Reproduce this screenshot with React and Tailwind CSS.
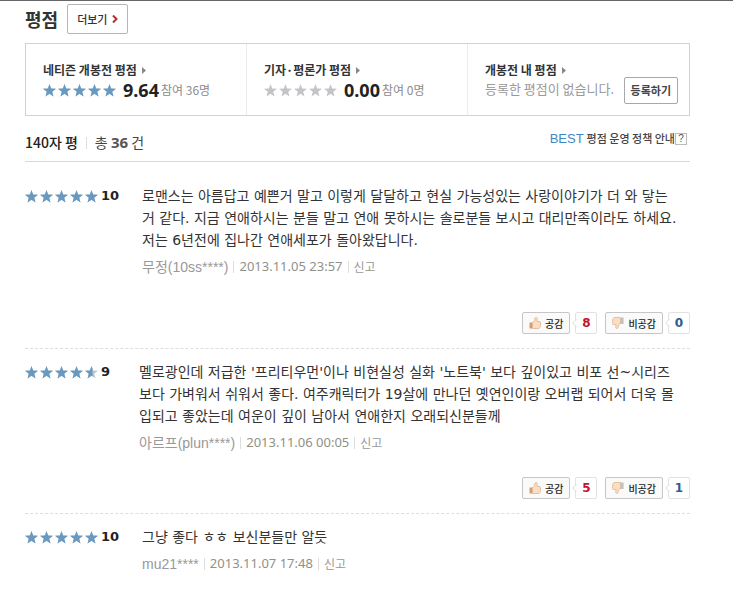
import React, { useState } from "react";

const reviews = [
  {
    id: 1,
    score: 10,
    lines: [
      "로맨스는 아름답고 예쁜거 말고 이렇게 달달하고 현실 가능성있는 사랑이야기가 더 와 닿는",
      "거 같다. 지금 연애하시는 분들 말고 연애 못하시는 솔로분들 보시고 대리만족이라도 하세요.",
      "저는 6년전에 집나간 연애세포가 돌아왔답니다.",
    ],
    author: "무정(10ss****)",
    date: "2013.11.05 23:57",
    likes: 8,
    dislikes: 0,
  },
  {
    id: 2,
    score: 9,
    lines: [
      "멜로광인데 저급한 '프리티우먼'이나 비현실성 실화 '노트북' 보다 깊이있고 비포 선~시리즈",
      "보다 가벼워서 쉬워서 좋다. 여주캐릭터가 19살에 만나던 옛연인이랑 오버랩 되어서 더욱 몰",
      "입되고 좋았는데 여운이 깊이 남아서 연애한지 오래되신분들께",
    ],
    author: "아르프(plun****)",
    date: "2013.11.06 00:05",
    likes: 5,
    dislikes: 1,
  },
  {
    id: 3,
    score: 10,
    lines: ["그냥 좋다 ㅎㅎ 보신분들만 알듯"],
    author: "mu21****",
    date: "2013.11.07 17:48",
  },
];

const STAR = "M6.5 0 8.1 4.5 13 4.7 9.2 7.7 10.5 12.4 6.5 9.7 2.5 12.4 3.8 7.7 0 4.7 4.9 4.5Z";

function Stars({ score }) {
  return (
    <div className="flex shrink-0 gap-0.5" role="img" aria-label={`${score}`}>
      {[1, 2, 3, 4, 5].map((n) => (
        <svg key={n} viewBox="0 0 13 13" className="h-[13px] w-[13px]">
          <path d={STAR} fill="#c2c4c7" />
          {score >= n * 2 && <path d={STAR} fill="#6799c2" />}
          {/* left half only */}
          {score === n * 2 - 1 && (
            <path d="M7.5 2.8V10.4L6.5 9.7 2.5 12.4 3.8 7.7 0 4.7 4.9 4.5 6.5 0Z" fill="#6799c2" />
          )}
        </svg>
      ))}
    </div>
  );
}

function ThumbUpIcon() {
  return (
    <svg viewBox="0 0 12 12" className="h-3 w-3">
      <path d="M0.5 5.5H3.5V11.5H0.5Z" fill="#d79c72" />
      <path
        d="M3.5 5.5 5.5 4 6 1 7.5 0.5 8.3 1.5 8 4.5H11L11.6 5.6 11 10.5 10 11.5H3.5Z"
        fill="#f8dec3"
        stroke="#dfb48c"
        strokeWidth="0.8"
      />
    </svg>
  );
}

function ThumbDownIcon() {
  return (
    <svg viewBox="0 0 12 12" className="h-3 w-3">
      <path d="M8 0.5H11.6V7H8Z" fill="#bfc3c9" />
      <path
        d="M8.5 6.5 6.5 8 6 11 4.5 11.5 3.7 10.5 4 7.5H1L0.4 6.4 1 1.5 2 0.5H8.5Z"
        fill="#f8dec3"
        stroke="#dfb892"
        strokeWidth="0.8"
      />
    </svg>
  );
}

function TitleLink({ children }) {
  return (
    <a href="#" className="flex items-center gap-[5px] text-[12px] leading-5 font-bold whitespace-nowrap text-[#333]">
      {children}
      <svg viewBox="0 0 4 7" className="h-[7px] w-1">
        <path d="M0 0 4 3.5 0 7Z" fill="#888" />
      </svg>
    </a>
  );
}

function ScoreCell({ title, stars, score, count }) {
  return (
    <div className="border-r border-[#ececec] pt-4 pl-[17px]">
      <TitleLink>{title}</TitleLink>
      <div className="flex h-5 items-center">
        <Stars score={stars} />
        <strong className="ml-[7px] font-['Noto_Sans'] text-[18px] leading-5 font-bold text-[#222]">{score}</strong>
        <span className="ml-0.5 text-[12px] whitespace-nowrap text-[#8c8c8c]">{count}</span>
      </div>
    </div>
  );
}

function Vote({ label, count, down, onVote }) {
  return (
    <div className="flex items-center gap-[5px]">
      <button
        type="button"
        onClick={onVote}
        className="flex h-[22px] items-center gap-1 rounded-[2px] border border-[#c6c6c6] bg-[#fafafa] px-1.5 text-[10px] font-medium text-[#222]"
      >
        {down ? <ThumbDownIcon /> : <ThumbUpIcon />}
        {label}
      </button>
      <span
        className={`relative flex h-[22px] w-[22px] items-center justify-center rounded-[2px] border border-[#e2e2e2] font-['DejaVu_Sans'] text-[12px] font-bold ${
          down ? "text-[#2d5c8e]" : "text-[#c4122f]"
        }`}
      >
        <svg viewBox="0 0 5 8" className="absolute top-1.5 -left-1 h-2 w-[5px]">
          <path d="M5 0 1 4 5 8Z" fill="#fff" />
          <path d="M4.5 0 0.7 4 4.5 8" fill="none" stroke="#dcdcdc" />
        </svg>
        {count}
      </span>
    </div>
  );
}

function Review({ review }) {
  const [likes, setLikes] = useState(review.likes);
  const [dislikes, setDislikes] = useState(review.dislikes);

  return (
    <li className="group border-b border-dashed border-[#dedede] pt-3 pb-3.5 first:pt-[23px] last:border-0">
      <div className="flex">
        <div className={`flex h-[22px] shrink-0 items-center gap-[3px] ${review.score === 10 ? "w-[117px]" : "w-[114px]"}`}>
          <Stars score={review.score} />
          <strong className="font-['DejaVu_Sans'] text-[13px] font-bold text-[#222]">{review.score}</strong>
        </div>
        <div>
          <p className="font-['DejaVu_Sans','Noto_Sans_CJK_KR',sans-serif] text-[14px] leading-[22px] whitespace-nowrap text-[#333]">
            {review.lines.map((line) => (
              <span key={line} className="block">
                {line}
              </span>
            ))}
          </p>
          <div className="mt-[5px] flex h-[22px] items-center gap-[5px] text-[#999]">
            <span className="font-['Liberation_Sans','Noto_Sans_CJK_KR',sans-serif] text-[14px]">{review.author}</span>
            <span className="h-3 w-px bg-[#ddd]" />
            <span className="font-['Noto_Sans'] text-[13px] text-[#8f9188]">{review.date}</span>
            <span className="h-3 w-px bg-[#ddd]" />
            <a href="#" className="text-[12px]">
              신고
            </a>
          </div>
        </div>
      </div>
      {review.likes !== undefined && (
        <div className="mt-[23px] flex justify-end gap-2 group-first:mt-[34px]">
          <Vote label="공감" count={likes} onVote={() => setLikes(likes + 1)} />
          <Vote label="비공감" count={dislikes} down onVote={() => setDislikes(dislikes + 1)} />
        </div>
      )}
    </li>
  );
}

function App() {
  return (
    <div className="border-t border-[#666] bg-white pt-[3px] pr-[43px] pl-[25px] font-['Noto_Sans_CJK_KR',sans-serif]">
      <header className="flex h-[30px] items-center gap-[9px]">
        <h1 className="text-[18px] font-bold text-[#333]">평점</h1>
        <button
          type="button"
          className="flex h-[30px] items-center gap-1 rounded-[2px] border border-[#b5b5b5] px-[9px] text-[11px] font-medium text-[#333]"
        >
          더보기
          <svg viewBox="0 0 6 8" className="h-2 w-1.5">
            <path d="M1 0.5 4.5 4 1 7.5" fill="none" stroke="#b5302a" strokeWidth="2" />
          </svg>
        </button>
      </header>

      <section className="mt-[9px] grid h-[73px] grid-cols-3 border border-[#d2d2d2]">
        <ScoreCell title="네티즌 개봉전 평점" stars={10} score="9.64" count="참여 36명" />
        <ScoreCell title="기자·평론가 평점" stars={0} score="0.00" count="참여 0명" />
        <div className="flex justify-between pt-4 pr-[11px] pl-[17px]">
          <div>
            <TitleLink>개봉전 내 평점</TitleLink>
            <p className="text-[13px] leading-[18px] whitespace-nowrap text-[#999]">등록한 평점이 없습니다.</p>
          </div>
          <button
            type="button"
            className="mt-[17px] h-[27px] shrink-0 rounded-[2px] border border-[#a8a8a8] px-1.5 text-[11px] font-bold text-[#444]"
          >
            등록하기
          </button>
        </div>
      </section>

      <div className="flex h-[46px] items-center border-b border-[#d8d8d8] pt-2">
        <h2 className="text-[14px] font-medium text-[#222]">140자 평</h2>
        <span className="mx-2 h-3 w-px bg-[#ddd]" />
        <span className="text-[14px] text-[#444]">
          총 <b className="font-['Noto_Sans'] text-[15px] font-bold text-[#555]">36</b> 건
        </span>
        <a href="#" className="mr-[3px] mb-2 ml-auto flex items-center text-[11px] font-medium text-[#444]">
          <span className="mr-[3px] font-['Liberation_Sans'] text-[13px] font-normal text-[#3f87c4]">BEST</span>
          평점 운영 정책 안내
          <span className="flex h-3 w-3 items-center justify-center border border-[#bbb] font-['Liberation_Sans'] text-[10px] text-[#555]">
            ?
          </span>
        </a>
      </div>

      <ul>
        {reviews.map((review) => (
          <Review key={review.id} review={review} />
        ))}
      </ul>
    </div>
  );
}

export default App;
